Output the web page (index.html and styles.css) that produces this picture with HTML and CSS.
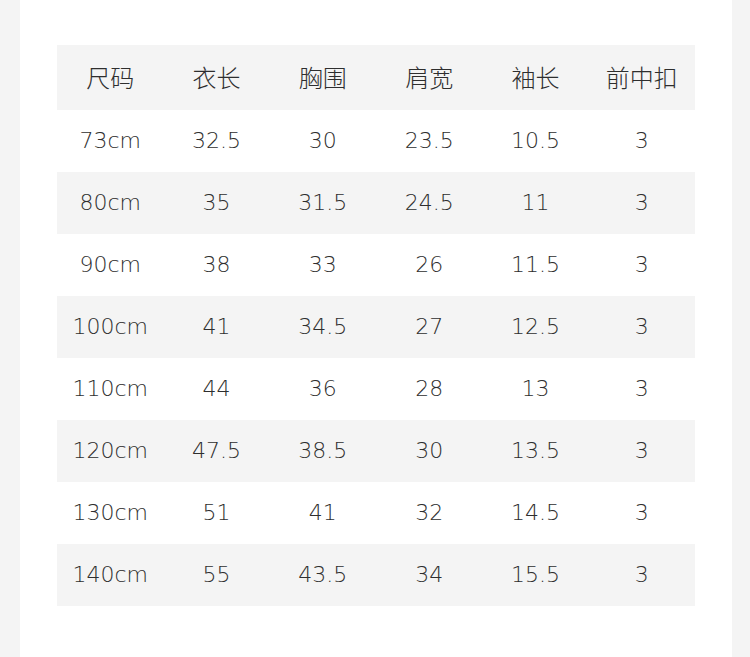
FILE: index.html
```html
<!DOCTYPE html>
<html lang="zh">
<head>
<meta charset="utf-8">
<title>尺码表</title>
<link rel="stylesheet" href="styles.css">
</head>
<body>
<div class="panel">
  <table class="size-table">
    <thead>
      <tr><th>尺码</th><th>衣长</th><th>胸围</th><th>肩宽</th><th>袖长</th><th>前中扣</th></tr>
    </thead>
    <tbody>
      <tr><td>73cm</td><td>32.5</td><td>30</td><td>23.5</td><td>10.5</td><td>3</td></tr>
      <tr><td>80cm</td><td>35</td><td>31.5</td><td>24.5</td><td>11</td><td>3</td></tr>
      <tr><td>90cm</td><td>38</td><td>33</td><td>26</td><td>11.5</td><td>3</td></tr>
      <tr><td>100cm</td><td>41</td><td>34.5</td><td>27</td><td>12.5</td><td>3</td></tr>
      <tr><td>110cm</td><td>44</td><td>36</td><td>28</td><td>13</td><td>3</td></tr>
      <tr><td>120cm</td><td>47.5</td><td>38.5</td><td>30</td><td>13.5</td><td>3</td></tr>
      <tr><td>130cm</td><td>51</td><td>41</td><td>32</td><td>14.5</td><td>3</td></tr>
      <tr><td>140cm</td><td>55</td><td>43.5</td><td>34</td><td>15.5</td><td>3</td></tr>
    </tbody>
  </table>
</div>
</body>
</html>
```

FILE: styles.css
```css
html, body {
  margin: 0;
  padding: 0;
  background: #f4f4f4;
  height: 100%;
}

.panel {
  box-sizing: border-box;
  width: 712px;
  height: 657px;
  margin-left: 20px;
  background: #ffffff;
  padding: 45px 37px 0 37px;
}

.size-table {
  width: 638px;
  table-layout: fixed;
  border-collapse: collapse;
  font-family: "DejaVu Sans", "Noto Sans CJK SC", sans-serif;
  font-weight: 200;
  color: #2e2e2e;
}

.size-table th,
.size-table td {
  padding: 0;
  text-align: center;
  vertical-align: middle;
}

.size-table thead tr {
  height: 65px;
  background: #f4f4f4;
}

.size-table th {
  font-family: "Noto Sans CJK SC", sans-serif;
  font-size: 24px;
  font-weight: 300;
  padding-bottom: 2px;
}

.size-table tbody tr {
  height: 62px;
}

.size-table tbody tr:nth-child(even) {
  background: #f4f4f4;
}

.size-table td {
  font-size: 22px;
  padding-bottom: 2px;
}
```
